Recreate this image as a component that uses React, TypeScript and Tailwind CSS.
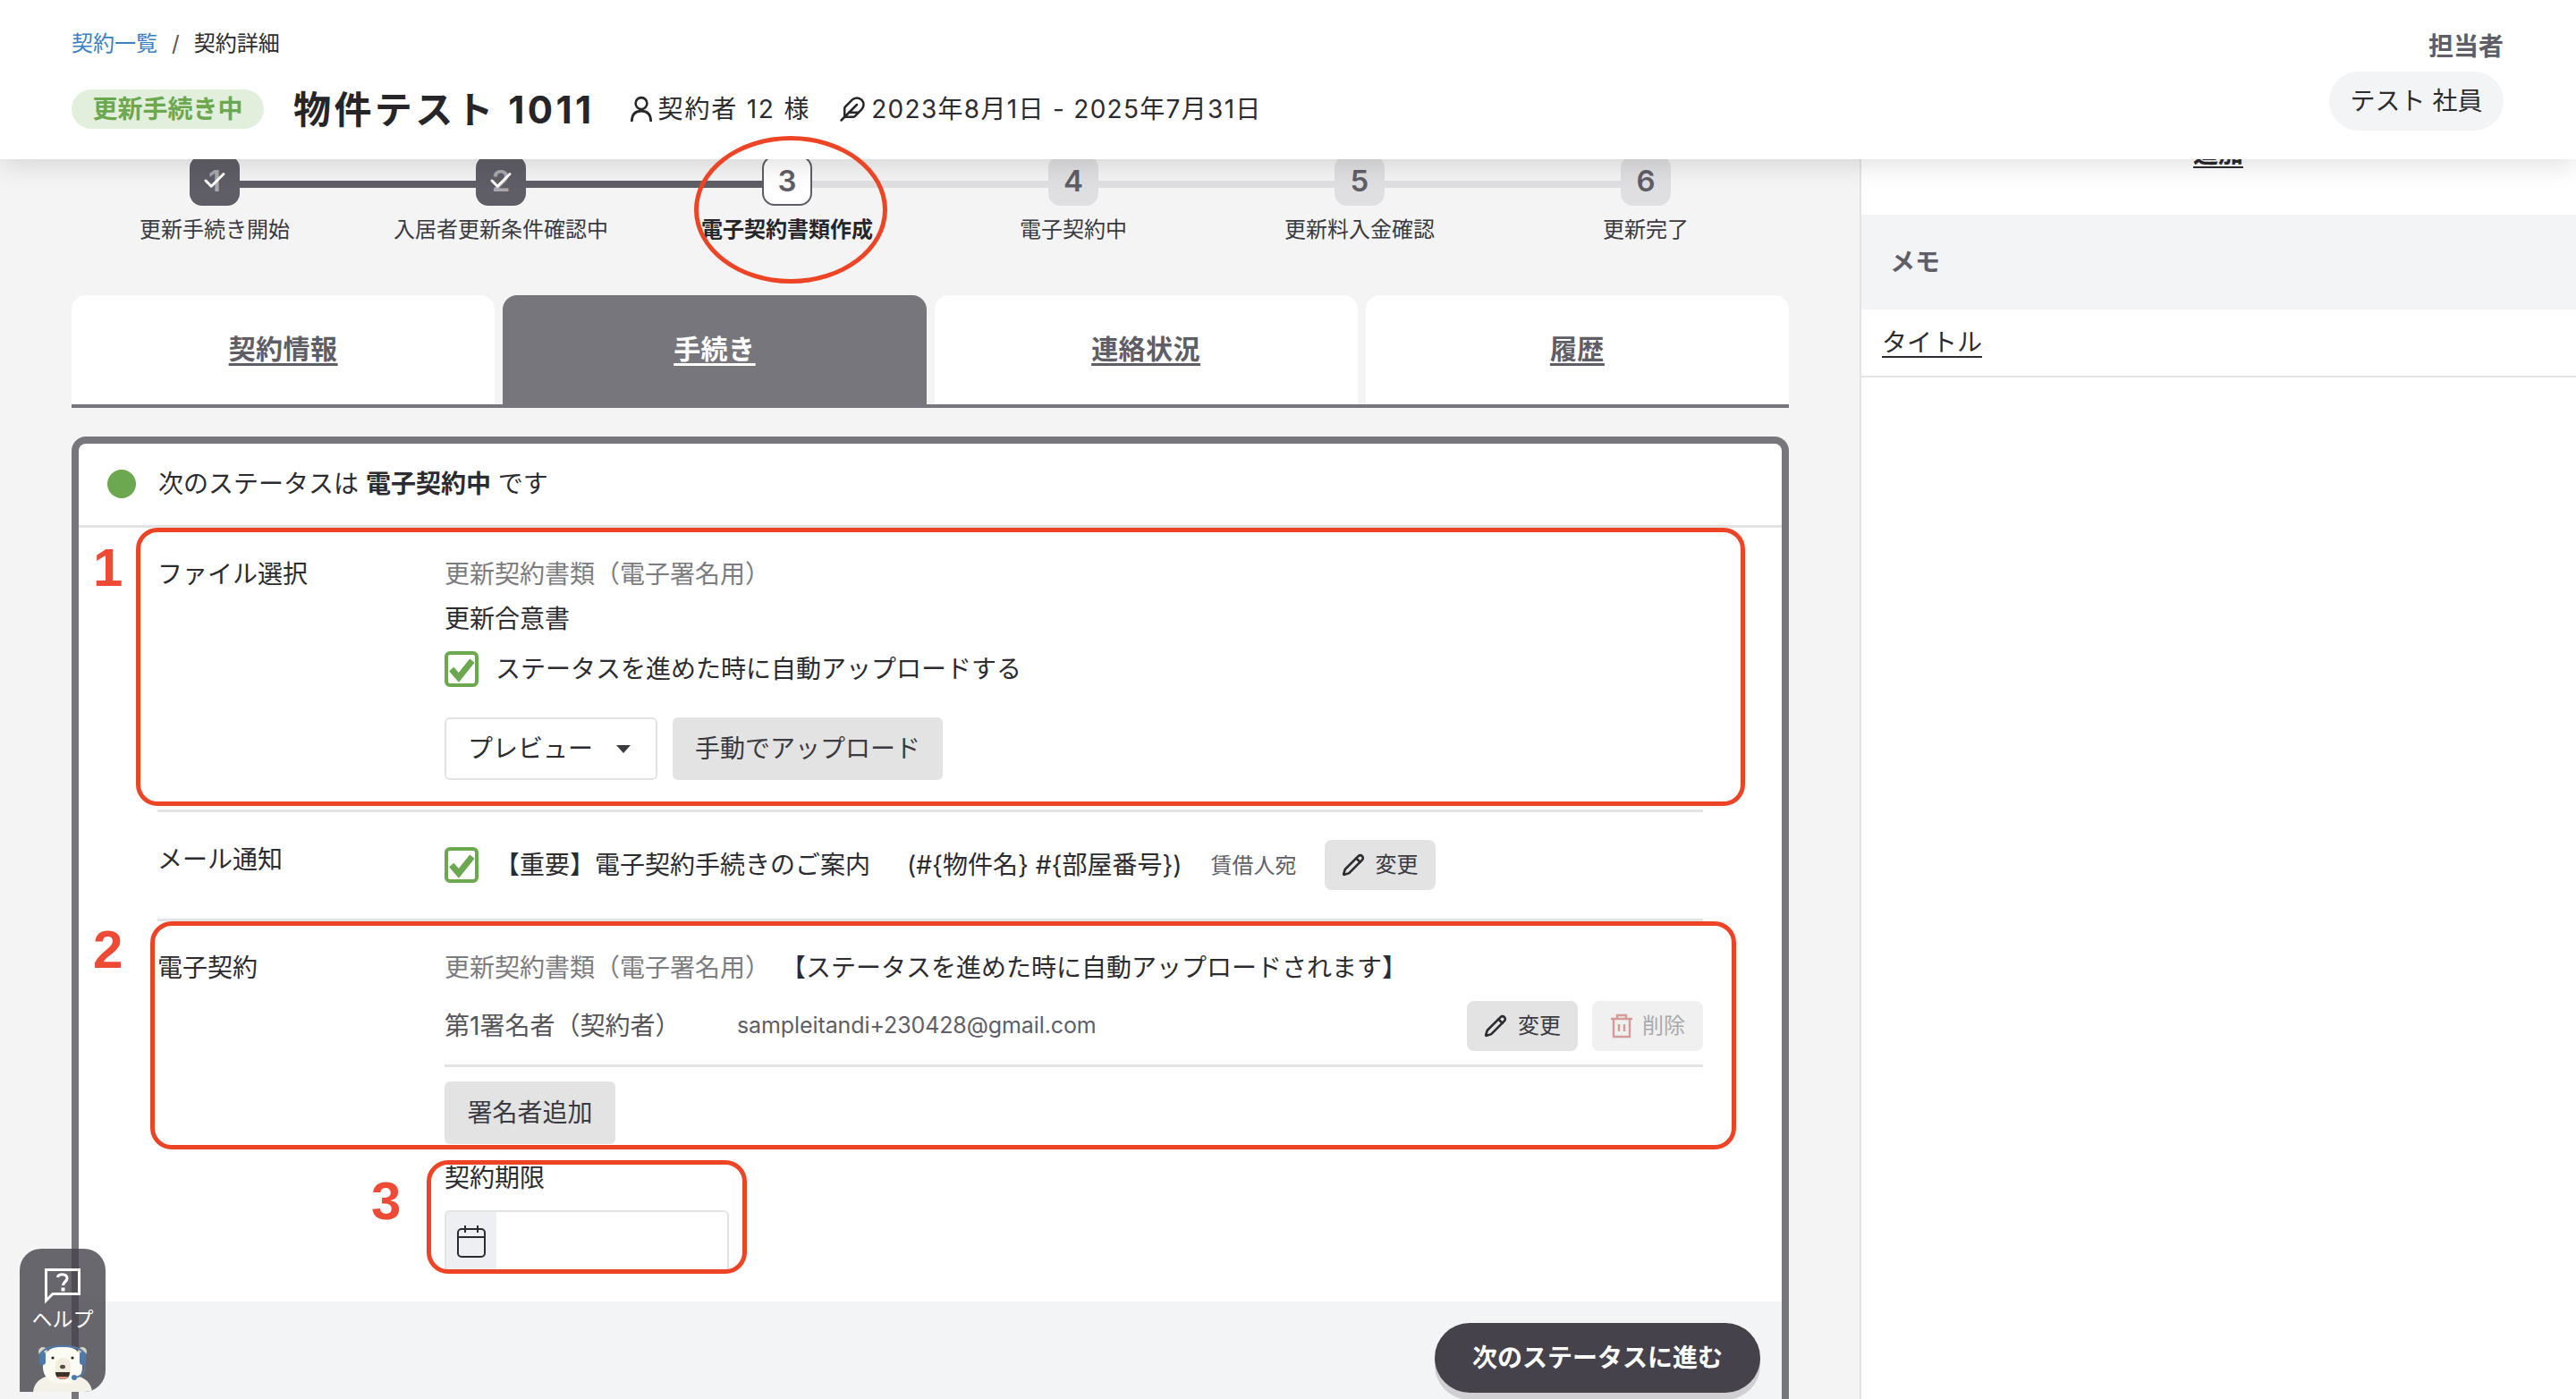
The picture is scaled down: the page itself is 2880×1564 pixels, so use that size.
import { Check, Feather, Pencil } from 'lucide-react'

const FONT = "font-['Inter','Noto_Sans_CJK_JP',sans-serif]"

const steps = ['更新手続き開始', '入居者更新条件確認中', '電子契約書類作成', '電子契約中', '更新料入金確認', '更新完了']
const tabs = ['契約情報', '手続き', '連絡状況', '履歴']

function GreenCheckbox() {
  return (
    <span className="flex h-[40px] w-[38px] shrink-0 items-center justify-center rounded-[6px] border-[4px] border-[#6ca84f] bg-white">
      <svg viewBox="0 0 24 24" className="h-[30px] w-[30px]">
        <path d="M3 12 L9.5 19.5 L21.5 4.5" fill="none" stroke="#6ca84f" strokeWidth="5.6" />
      </svg>
    </span>
  )
}

function EditButton() {
  return (
    <button className="flex h-[56px] w-[124px] items-center justify-center gap-[12px] rounded-[8px] bg-[#e3e3e4] text-[24px] text-[#3a3a40]">
      <Pencil className="h-[26px] w-[26px] text-[#2b2b30]" strokeWidth={2.4} />
      変更
    </button>
  )
}

function Step({ label, index }: { label: string; index: number }) {
  const done = index < 2
  const active = index === 2
  return (
    <div className="relative flex flex-col items-center">
      {/* connector to the next step */}
      {index < 5 && (
        <div className={`absolute left-1/2 top-[28px] h-[8px] w-full ${index < 2 ? 'bg-[#5f5e66]' : 'bg-[#dfdfe2]'}`} />
      )}
      <div
        className={`relative flex h-[56px] w-[56px] items-center justify-center rounded-[14px] pt-[2px] text-[33px] font-semibold ${
          done
            ? 'bg-[#5f5e66] text-[#a9a8ad]'
            : active
              ? 'border-2 border-[#5f5e66] bg-white text-[#5f5e66]'
              : 'bg-[#dfdfe2] text-[#5f5e66]'
        }`}
      >
        {index + 1}
        {done && <Check className="absolute left-[13px] top-[13px] h-[30px] w-[30px] text-white" strokeWidth={2.4} />}
      </div>
      <div className={`mt-[10px] h-[34px] text-[24px] leading-[34px] text-[#3a3a40] ${active ? 'font-bold text-[#26262a]' : ''}`}>
        {label}
      </div>
    </div>
  )
}

function Bear() {
  return (
    <svg viewBox="0 0 66 56" className="h-[56px] w-[66px]">
      <path d="M0 56 C1 46 8 40 18 38 L48 38 C58 40 65 46 66 56 Z" fill="#f4f2e8" />
      <circle cx="11" cy="11" r="5" fill="#d9d3bf" />
      <circle cx="55" cy="11" r="5" fill="#d9d3bf" />
      <rect x="11" y="6" width="44" height="40" rx="17" fill="#fbfaf3" />
      <rect x="25" y="18" width="17" height="24" rx="8" fill="#f1eee0" />
      <path d="M9 13 C14 2 52 2 57 13" fill="none" stroke="#4e79ad" strokeWidth="2" />
      <rect x="7" y="11" width="7" height="15" rx="3.5" fill="#4e79ad" />
      <rect x="52" y="11" width="7" height="15" rx="3.5" fill="#4e79ad" />
      <path d="M57 24 C60 32 56 38 47 40" fill="none" stroke="#4e79ad" strokeWidth="1.6" />
      <circle cx="46" cy="40" r="3" fill="#4e79ad" />
      <circle cx="22" cy="18" r="1.6" fill="#222" />
      <circle cx="44" cy="18" r="1.6" fill="#222" />
      <ellipse cx="33" cy="28" rx="3" ry="2.2" fill="#5a4a3c" />
      <path d="M25 34 H41 C41 40 37 42 33 42 C29 42 25 40 25 34 Z" fill="#3c3028" />
      <path d="M27 39 H39 C38 41 36 42 33 42 C30 42 28 41 27 39 Z" fill="#e79a8c" />
    </svg>
  )
}

export default function App() {
  return (
    <div className={`relative h-[1564px] w-[2880px] overflow-hidden bg-white text-[28px] text-[#2b2b30] ${FONT}`}>
      {/* Header */}
      <header className="relative z-10 flex h-[178px] justify-between bg-white pl-[80px] pr-[81px] shadow-[0_6px_28px_rgba(0,0,0,0.13)]">
        <div>
          <div className="mt-[32px] flex h-[34px] items-center text-[24px] leading-[34px]">
            <span className="text-[#3b7fc4]">契約一覧</span>
            <span className="mx-[16px] text-[#555]">/</span>
            <span>契約詳細</span>
          </div>
          <div className="mt-[34px] flex h-[44px] items-center">
            <span className="flex h-[44px] w-[215px] items-center justify-center rounded-full bg-[#e2efdc] text-[28px] font-bold text-[#6ca84f]">
              更新手続き中
            </span>
            <span className="ml-[33px] whitespace-pre text-[42px] font-bold tracking-[3.4px] text-[#26262a]">物件テスト 1011</span>
            <svg viewBox="0 0 24 28" className="ml-[39px] h-[30px] w-[26px]" fill="none" stroke="#26262a" strokeWidth="2.4">
              <circle cx="12" cy="8" r="6" />
              <path d="M2 27 C2 19 6 16 12 16 C18 16 22 19 22 27" />
            </svg>
            <span className="ml-[6px] whitespace-pre tracking-[1.8px]">契約者 12 様</span>
            <Feather className="ml-[32px] h-[30px] w-[30px] text-[#26262a]" strokeWidth={2} />
            <span className="ml-[6px] whitespace-pre tracking-[1.3px]">2023年8月1日 - 2025年7月31日</span>
          </div>
        </div>
        <div className="flex flex-col items-end">
          <div className="mt-[32px] h-[40px] text-[28px] font-bold leading-[40px] text-[#5f5e66]">担当者</div>
          <div className="mt-[8px] flex h-[66px] w-[195px] items-center justify-center whitespace-pre rounded-full bg-[#f3f4f6] text-[28px]">
            テスト 社員
          </div>
        </div>
      </header>

      <div className="flex h-[1386px]">
        {/* Main column */}
        <main className="h-full w-[2079px] shrink-0 overflow-hidden bg-[#f4f4f5] px-[80px] pr-[79px]">
          <div className="-mt-[4px] grid h-[156px] grid-cols-6">
            {steps.map((label, i) => (
              <Step key={label} label={label} index={i} />
            ))}
          </div>

          {/* Tabs */}
          <div className="grid h-[126px] grid-cols-4 gap-[9px] border-b-[4px] border-[#77767c]">
            {tabs.map((tab, i) => (
              <div
                key={tab}
                className={`flex items-center justify-center rounded-t-[16px] pb-[2px] text-[30px] font-bold tracking-[0.5px] underline underline-offset-[5px] ${
                  i === 1 ? 'bg-[#77767c] text-white' : 'bg-white text-[#5f5e66]'
                }`}
              >
                {tab}
              </div>
            ))}
          </div>

          {/* Card */}
          <div className="mt-[32px] rounded-t-[16px] border-x-[8px] border-t-[8px] border-[#77767c] bg-white">
            <div className="flex h-[94px] items-center border-b-[3px] border-[#e3e3e4] pb-[2px] pl-[32px]">
              <span className="h-[32px] w-[32px] rounded-full bg-[#6ca84f]" />
              <span className="ml-[25px] whitespace-pre">
                次のステータスは <b className="font-bold">電子契約中</b> です
              </span>
            </div>

            <div className="px-[88px]">
              {/* File */}
              <div className="grid grid-cols-[321px_1fr] border-b-[3px] border-[#e3e3e4] pb-[33px] pt-[32px]">
                <div className="leading-[40px]">ファイル選択</div>
                <div>
                  <div className="leading-[40px] text-[#7c7c80]">更新契約書類（電子署名用）</div>
                  <div className="mt-[10px] leading-[40px]">更新合意書</div>
                  <label className="mt-[16px] flex h-[40px] items-center">
                    <GreenCheckbox />
                    <span className="ml-[19px] leading-[40px]">ステータスを進めた時に自動アップロードする</span>
                  </label>
                  <div className="mt-[34px] flex gap-[17px]">
                    <button className="flex h-[70px] w-[238px] items-center justify-center gap-[26px] rounded-[6px] border-[2px] border-[#e3e3e4] bg-white pr-[4px]">
                      プレビュー
                      <span className="h-0 w-0 border-x-[8px] border-t-[9px] border-x-transparent border-t-[#3a3a40]" />
                    </button>
                    <button className="h-[70px] w-[302px] rounded-[6px] bg-[#e3e3e4] text-[#3a3a40]">手動でアップロード</button>
                  </div>
                </div>
              </div>

              {/* Mail */}
              <div className="grid grid-cols-[321px_1fr] border-b-[3px] border-[#e3e3e4] pb-[32px] pt-[31px]">
                <div className="mt-[2px] leading-[40px]">メール通知</div>
                <div className="flex h-[56px] items-center whitespace-pre">
                  <GreenCheckbox />
                  <span className="ml-[18px]">【重要】電子契約手続きのご案内　</span>
                  <span className="ml-[13px]">(#{'{'}物件名{'}'} #{'{'}部屋番号{'}'})</span>
                  <span className="ml-[32px] mt-[2px] text-[24px] text-[#5f5e66]">賃借人宛</span>
                  <span className="ml-[31px]">
                    <EditButton />
                  </span>
                </div>
              </div>

              {/* E-contract */}
              <div className="grid grid-cols-[321px_1fr] pt-[32px]">
                <div className="leading-[40px]">電子契約</div>
                <div>
                  <div className="flex leading-[40px]">
                    <span className="text-[#7c7c80]">更新契約書類（電子署名用）</span>
                    <span className="ml-[12px]">【ステータスを進めた時に自動アップロードされます】</span>
                  </div>
                  <div className="mt-[17px] flex h-[74px] items-start border-b-[3px] border-[#e3e3e4]">
                    <div className="flex h-[56px] w-[327px] items-center text-[#55555a]">第1署名者（契約者）</div>
                    <div className="flex h-[56px] flex-1 items-center text-[25px] tracking-[-0.1px] text-[#5f5e66]">sampleitandi+230428@gmail.com</div>
                    <EditButton />
                    <button className="ml-[16px] flex h-[56px] w-[124px] items-center justify-center gap-[10px] rounded-[8px] bg-[#f0f0f1] text-[24px] text-[#a9a9ad]">
                      <svg viewBox="0 0 26 28" className="h-[28px] w-[26px]" fill="none" stroke="#d59a9a" strokeWidth="2.4">
                        <path d="M1 6 H25 M8 6 V2 H18 V6 M4 6 V26 H22 V6 M10 12 V20 M16 12 V20" />
                      </svg>
                      削除
                    </button>
                  </div>
                  <button className="mt-[16px] block h-[70px] w-[191px] rounded-[6px] bg-[#e3e3e4] text-[#3a3a40]">署名者追加</button>
                  <div className="mt-[18px] leading-[40px]">契約期限</div>
                  <div className="mt-[16px] flex h-[70px] w-[318px] overflow-hidden rounded-[6px] border-[2px] border-[#e3e3e4] bg-white">
                    <div className="flex w-[56px] items-center justify-center bg-[#eeeff2]">
                      <svg viewBox="0 0 32 36" className="h-[36px] w-[32px]" fill="none" stroke="#2b2b30" strokeWidth="2">
                        <rect x="1" y="4" width="30" height="31" rx="4" />
                        <path d="M1 13 H31 M9 0 V8 M23 0 V8" />
                      </svg>
                    </div>
                  </div>
                </div>
              </div>
            </div>

            {/* Footer */}
            <div className="mt-[32px] flex h-[120px] justify-end bg-[#f3f4f6] pr-[24px] pt-[24px]">
              <button className="h-[78px] w-[364px] rounded-full bg-[#45424b] text-[28px] font-bold text-white shadow-[0_8px_0_#d0d0d2]">
                次のステータスに進む
              </button>
            </div>
          </div>
        </main>

        {/* Right panel */}
        <aside className="h-full flex-1 border-l-2 border-[#e3e3e4] bg-white">
          <div className="-mt-[26px] flex h-[88px] pl-[371px]">
            <span className="text-[28px] font-bold leading-[40px] underline underline-offset-[4px]">追加</span>
          </div>
          <div className="flex h-[106px] items-center bg-[#f3f4f6] pl-[32px] font-bold text-[#5f5e66]">メモ</div>
          <div className="flex h-[76px] items-center border-b-[2px] border-[#e3e3e4] pl-[23px]">
            <span className="underline underline-offset-[5px]">タイトル</span>
          </div>
        </aside>
      </div>

      {/* Help widget */}
      <div className="absolute left-[22px] top-[1396px] z-20 flex h-[160px] w-[96px] flex-col items-center overflow-hidden rounded-[24px] rounded-bl-none bg-[#45424b]/80">
        <svg viewBox="0 0 40 40" className="mt-[22px] h-[40px] w-[40px]" fill="none">
          <path d="M1.5 1.5 H38.5 V28.5 H9 L1.5 36 Z" stroke="#fff" strokeWidth="3" />
          <path d="M14.5 10 C15 5.5 25 5.5 25 11 C25 15 20.5 15 20.5 19" stroke="#fff" strokeWidth="3.2" />
          <rect x="18.5" y="21.5" width="4" height="4" fill="#fff" />
        </svg>
        <div className="h-[34px] text-[23px] leading-[34px] text-white">ヘルプ</div>
        <div className="mt-auto">
          <Bear />
        </div>
      </div>

      {/* Red annotations */}
      <div className="absolute left-[776px] top-[152px] z-20 h-[165px] w-[216px] rounded-[50%] border-[5px] border-[#ee4426]" />
      <div className="absolute left-[152px] top-[590px] z-20 h-[311px] w-[1799px] rounded-[24px] border-[5px] border-[#ee4426]" />
      <div className="absolute left-[168px] top-[1030px] z-20 h-[255px] w-[1773px] rounded-[24px] border-[5px] border-[#ee4426]" />
      <div className="absolute left-[477px] top-[1297px] z-20 h-[127px] w-[358px] rounded-[24px] border-[5px] border-[#ee4426]" />
      <div className="absolute left-[104px] top-[601px] z-20 font-['Liberation_Sans',sans-serif] text-[60px] font-bold leading-[68px] text-[#ee4a35]">1</div>
      <div className="absolute left-[104px] top-[1028px] z-20 font-['Liberation_Sans',sans-serif] text-[60px] font-bold leading-[68px] text-[#ee4a35]">2</div>
      <div className="absolute left-[415px] top-[1309px] z-20 font-['Liberation_Sans',sans-serif] text-[60px] font-bold leading-[68px] text-[#ee4a35]">3</div>
    </div>
  )
}
